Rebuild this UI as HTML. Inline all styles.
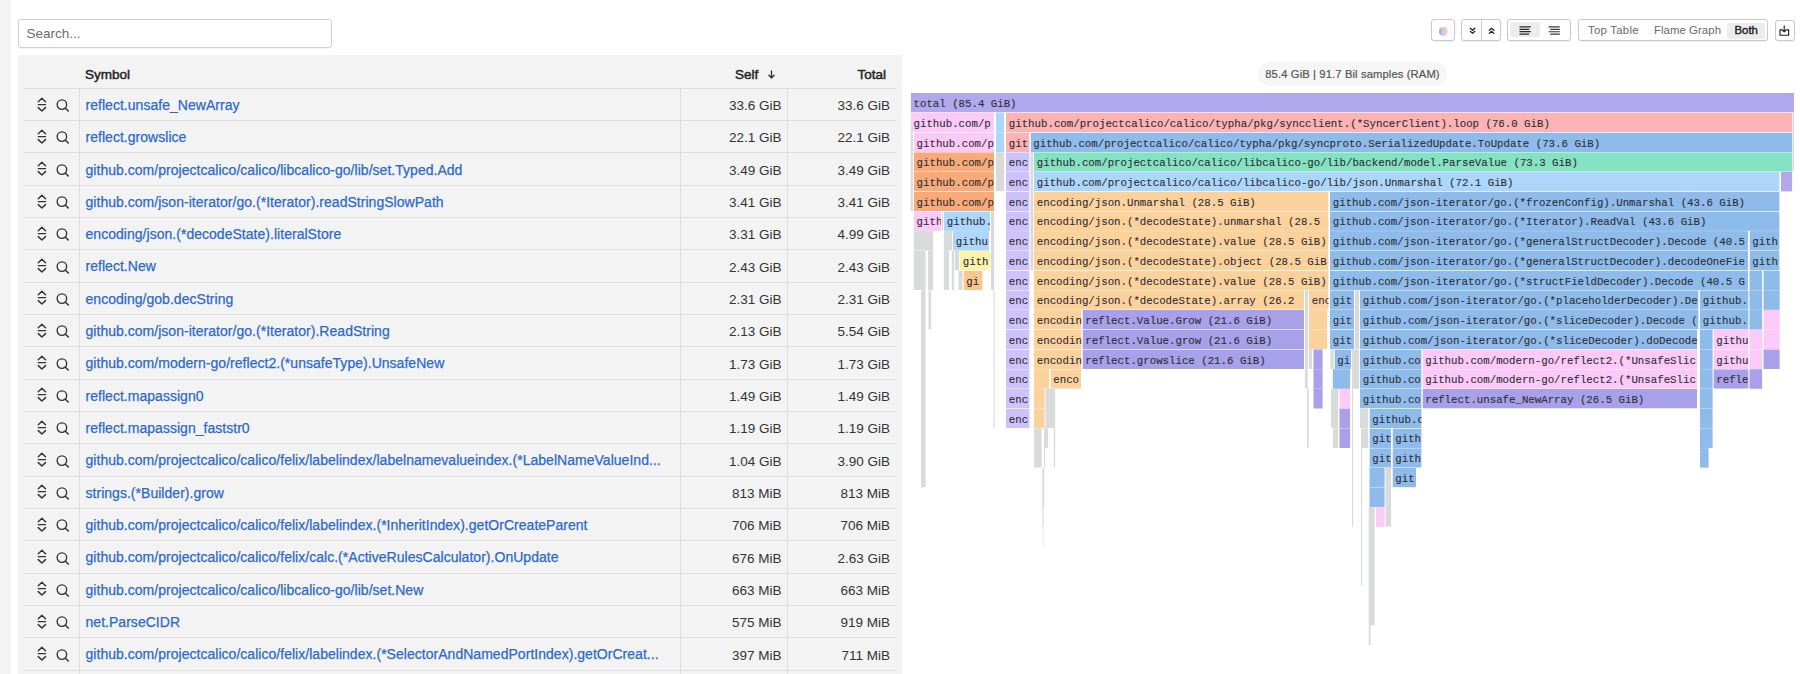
<!DOCTYPE html><html><head><meta charset="utf-8"><style>
*{box-sizing:border-box;margin:0;padding:0}
html,body{width:1800px;height:674px;overflow:hidden;background:#fff;font-family:"Liberation Sans",sans-serif}
.strip{position:absolute;left:0;top:0;width:10.5px;height:674px;background:#f3f3f3}
.search{position:absolute;left:18px;top:19px;width:314px;height:28.5px;border:1px solid #cfcfcf;border-radius:3px;background:#fff;box-shadow:0 1px 1px rgba(0,0,0,0.05)}
.search span{position:absolute;left:7.5px;top:6px;font-size:13.5px;color:#6b6b6b}
.tbl{position:absolute;left:18px;top:55px;width:883.5px;height:640px;background:#f3f3f3}
.hdr{position:absolute;top:0;height:33px;font-size:13.5px;font-weight:400;color:#222;-webkit-text-stroke:0.45px #222}
.hline{position:absolute;left:6px;width:872px;height:1px;background:#dedede}
.vline{position:absolute;width:1px;background:#dedede}
.sym{position:absolute;left:67.5px;font-size:14px;line-height:16px;color:#2d69cc;white-space:nowrap;letter-spacing:0.03px;-webkit-text-stroke:0.25px #2d69cc}
.num{position:absolute;font-size:13.5px;line-height:16px;color:#333;text-align:right;white-space:nowrap}
.ic1{position:absolute;left:18.5px}
.ic2{position:absolute;left:37.6px}
.tb{position:absolute;border:1px solid #c9c9c9;border-radius:3px;background:#fff;box-shadow:0 1px 1px rgba(0,0,0,0.06)}
.pill{position:absolute;left:1258px;top:62px;width:189px;height:24px;border-radius:12px;background:#f6f6f6;font-size:11.2px;color:#555;line-height:24px;text-align:center;letter-spacing:0.13px;-webkit-text-stroke:0.2px #555}
.fg{position:absolute;left:0;top:0}
.b{position:absolute;overflow:hidden;white-space:nowrap;font-family:"Liberation Mono",monospace;font-size:10.75px;line-height:19px;padding-left:3px;color:#2a2a3a}
</style></head><body>
<div class="strip"></div>
<div class="search"><span>Search...</span></div>

<div class="tbl">
<div class="hdr" style="left:67px;top:12px">Symbol</div>
<div class="hdr" style="left:717px;top:12px">Self <svg width="9" height="9" viewBox="0 0 9 9" style="vertical-align:0px;margin-left:5px"><path d="M4.5 1 V7.8 M1.9 5.3 L4.5 7.9 L7.1 5.3" fill="none" stroke="#333" stroke-width="1.35" stroke-linecap="round" stroke-linejoin="round"/></svg></div>
<div class="hdr" style="left:820px;top:12px;width:48px;text-align:right">Total</div>
<div class="hline" style="top:32.8px"></div>
<div class="ic1" style="top:41.56px"><svg width="10" height="15" viewBox="0 0 10 15"><path d="M1.3 4.7 L4.9 1.3 L8.5 4.7 M1.3 7.6 H8.5 M1.3 10.6 L4.9 14.0 L8.5 10.6" fill="none" stroke="#333" stroke-width="1.45" stroke-linecap="round" stroke-linejoin="round"/></svg></div>
<div class="ic2" style="top:44.06px"><svg width="14" height="14" viewBox="0 0 14 14"><circle cx="5.9" cy="5.6" r="4.75" fill="none" stroke="#333" stroke-width="1.35"/><path d="M9.4 9.2 L12.3 12" stroke="#333" stroke-width="1.5" stroke-linecap="round"/></svg></div>
<div class="sym" style="top:41.86px">reflect.unsafe_NewArray</div>
<div class="num" style="left:660px;width:103.5px;top:43.06px">33.6 GiB</div>
<div class="num" style="left:770px;width:102px;top:43.06px">33.6 GiB</div>
<div class="hline" style="top:65.12px"></div>
<div class="ic1" style="top:73.88px"><svg width="10" height="15" viewBox="0 0 10 15"><path d="M1.3 4.7 L4.9 1.3 L8.5 4.7 M1.3 7.6 H8.5 M1.3 10.6 L4.9 14.0 L8.5 10.6" fill="none" stroke="#333" stroke-width="1.45" stroke-linecap="round" stroke-linejoin="round"/></svg></div>
<div class="ic2" style="top:76.38px"><svg width="14" height="14" viewBox="0 0 14 14"><circle cx="5.9" cy="5.6" r="4.75" fill="none" stroke="#333" stroke-width="1.35"/><path d="M9.4 9.2 L12.3 12" stroke="#333" stroke-width="1.5" stroke-linecap="round"/></svg></div>
<div class="sym" style="top:74.18px">reflect.growslice</div>
<div class="num" style="left:660px;width:103.5px;top:75.38px">22.1 GiB</div>
<div class="num" style="left:770px;width:102px;top:75.38px">22.1 GiB</div>
<div class="hline" style="top:97.44px"></div>
<div class="ic1" style="top:106.20px"><svg width="10" height="15" viewBox="0 0 10 15"><path d="M1.3 4.7 L4.9 1.3 L8.5 4.7 M1.3 7.6 H8.5 M1.3 10.6 L4.9 14.0 L8.5 10.6" fill="none" stroke="#333" stroke-width="1.45" stroke-linecap="round" stroke-linejoin="round"/></svg></div>
<div class="ic2" style="top:108.70px"><svg width="14" height="14" viewBox="0 0 14 14"><circle cx="5.9" cy="5.6" r="4.75" fill="none" stroke="#333" stroke-width="1.35"/><path d="M9.4 9.2 L12.3 12" stroke="#333" stroke-width="1.5" stroke-linecap="round"/></svg></div>
<div class="sym" style="top:106.50px">github.com/projectcalico/calico/libcalico-go/lib/set.Typed.Add</div>
<div class="num" style="left:660px;width:103.5px;top:107.70px">3.49 GiB</div>
<div class="num" style="left:770px;width:102px;top:107.70px">3.49 GiB</div>
<div class="hline" style="top:129.76px"></div>
<div class="ic1" style="top:138.52px"><svg width="10" height="15" viewBox="0 0 10 15"><path d="M1.3 4.7 L4.9 1.3 L8.5 4.7 M1.3 7.6 H8.5 M1.3 10.6 L4.9 14.0 L8.5 10.6" fill="none" stroke="#333" stroke-width="1.45" stroke-linecap="round" stroke-linejoin="round"/></svg></div>
<div class="ic2" style="top:141.02px"><svg width="14" height="14" viewBox="0 0 14 14"><circle cx="5.9" cy="5.6" r="4.75" fill="none" stroke="#333" stroke-width="1.35"/><path d="M9.4 9.2 L12.3 12" stroke="#333" stroke-width="1.5" stroke-linecap="round"/></svg></div>
<div class="sym" style="top:138.82px">github.com/json-iterator/go.(*Iterator).readStringSlowPath</div>
<div class="num" style="left:660px;width:103.5px;top:140.02px">3.41 GiB</div>
<div class="num" style="left:770px;width:102px;top:140.02px">3.41 GiB</div>
<div class="hline" style="top:162.08px"></div>
<div class="ic1" style="top:170.84px"><svg width="10" height="15" viewBox="0 0 10 15"><path d="M1.3 4.7 L4.9 1.3 L8.5 4.7 M1.3 7.6 H8.5 M1.3 10.6 L4.9 14.0 L8.5 10.6" fill="none" stroke="#333" stroke-width="1.45" stroke-linecap="round" stroke-linejoin="round"/></svg></div>
<div class="ic2" style="top:173.34px"><svg width="14" height="14" viewBox="0 0 14 14"><circle cx="5.9" cy="5.6" r="4.75" fill="none" stroke="#333" stroke-width="1.35"/><path d="M9.4 9.2 L12.3 12" stroke="#333" stroke-width="1.5" stroke-linecap="round"/></svg></div>
<div class="sym" style="top:171.14px">encoding/json.(*decodeState).literalStore</div>
<div class="num" style="left:660px;width:103.5px;top:172.34px">3.31 GiB</div>
<div class="num" style="left:770px;width:102px;top:172.34px">4.99 GiB</div>
<div class="hline" style="top:194.40px"></div>
<div class="ic1" style="top:203.16px"><svg width="10" height="15" viewBox="0 0 10 15"><path d="M1.3 4.7 L4.9 1.3 L8.5 4.7 M1.3 7.6 H8.5 M1.3 10.6 L4.9 14.0 L8.5 10.6" fill="none" stroke="#333" stroke-width="1.45" stroke-linecap="round" stroke-linejoin="round"/></svg></div>
<div class="ic2" style="top:205.66px"><svg width="14" height="14" viewBox="0 0 14 14"><circle cx="5.9" cy="5.6" r="4.75" fill="none" stroke="#333" stroke-width="1.35"/><path d="M9.4 9.2 L12.3 12" stroke="#333" stroke-width="1.5" stroke-linecap="round"/></svg></div>
<div class="sym" style="top:203.46px">reflect.New</div>
<div class="num" style="left:660px;width:103.5px;top:204.66px">2.43 GiB</div>
<div class="num" style="left:770px;width:102px;top:204.66px">2.43 GiB</div>
<div class="hline" style="top:226.72px"></div>
<div class="ic1" style="top:235.48px"><svg width="10" height="15" viewBox="0 0 10 15"><path d="M1.3 4.7 L4.9 1.3 L8.5 4.7 M1.3 7.6 H8.5 M1.3 10.6 L4.9 14.0 L8.5 10.6" fill="none" stroke="#333" stroke-width="1.45" stroke-linecap="round" stroke-linejoin="round"/></svg></div>
<div class="ic2" style="top:237.98px"><svg width="14" height="14" viewBox="0 0 14 14"><circle cx="5.9" cy="5.6" r="4.75" fill="none" stroke="#333" stroke-width="1.35"/><path d="M9.4 9.2 L12.3 12" stroke="#333" stroke-width="1.5" stroke-linecap="round"/></svg></div>
<div class="sym" style="top:235.78px">encoding/gob.decString</div>
<div class="num" style="left:660px;width:103.5px;top:236.98px">2.31 GiB</div>
<div class="num" style="left:770px;width:102px;top:236.98px">2.31 GiB</div>
<div class="hline" style="top:259.04px"></div>
<div class="ic1" style="top:267.80px"><svg width="10" height="15" viewBox="0 0 10 15"><path d="M1.3 4.7 L4.9 1.3 L8.5 4.7 M1.3 7.6 H8.5 M1.3 10.6 L4.9 14.0 L8.5 10.6" fill="none" stroke="#333" stroke-width="1.45" stroke-linecap="round" stroke-linejoin="round"/></svg></div>
<div class="ic2" style="top:270.30px"><svg width="14" height="14" viewBox="0 0 14 14"><circle cx="5.9" cy="5.6" r="4.75" fill="none" stroke="#333" stroke-width="1.35"/><path d="M9.4 9.2 L12.3 12" stroke="#333" stroke-width="1.5" stroke-linecap="round"/></svg></div>
<div class="sym" style="top:268.10px">github.com/json-iterator/go.(*Iterator).ReadString</div>
<div class="num" style="left:660px;width:103.5px;top:269.30px">2.13 GiB</div>
<div class="num" style="left:770px;width:102px;top:269.30px">5.54 GiB</div>
<div class="hline" style="top:291.36px"></div>
<div class="ic1" style="top:300.12px"><svg width="10" height="15" viewBox="0 0 10 15"><path d="M1.3 4.7 L4.9 1.3 L8.5 4.7 M1.3 7.6 H8.5 M1.3 10.6 L4.9 14.0 L8.5 10.6" fill="none" stroke="#333" stroke-width="1.45" stroke-linecap="round" stroke-linejoin="round"/></svg></div>
<div class="ic2" style="top:302.62px"><svg width="14" height="14" viewBox="0 0 14 14"><circle cx="5.9" cy="5.6" r="4.75" fill="none" stroke="#333" stroke-width="1.35"/><path d="M9.4 9.2 L12.3 12" stroke="#333" stroke-width="1.5" stroke-linecap="round"/></svg></div>
<div class="sym" style="top:300.42px">github.com/modern-go/reflect2.(*unsafeType).UnsafeNew</div>
<div class="num" style="left:660px;width:103.5px;top:301.62px">1.73 GiB</div>
<div class="num" style="left:770px;width:102px;top:301.62px">1.73 GiB</div>
<div class="hline" style="top:323.68px"></div>
<div class="ic1" style="top:332.44px"><svg width="10" height="15" viewBox="0 0 10 15"><path d="M1.3 4.7 L4.9 1.3 L8.5 4.7 M1.3 7.6 H8.5 M1.3 10.6 L4.9 14.0 L8.5 10.6" fill="none" stroke="#333" stroke-width="1.45" stroke-linecap="round" stroke-linejoin="round"/></svg></div>
<div class="ic2" style="top:334.94px"><svg width="14" height="14" viewBox="0 0 14 14"><circle cx="5.9" cy="5.6" r="4.75" fill="none" stroke="#333" stroke-width="1.35"/><path d="M9.4 9.2 L12.3 12" stroke="#333" stroke-width="1.5" stroke-linecap="round"/></svg></div>
<div class="sym" style="top:332.74px">reflect.mapassign0</div>
<div class="num" style="left:660px;width:103.5px;top:333.94px">1.49 GiB</div>
<div class="num" style="left:770px;width:102px;top:333.94px">1.49 GiB</div>
<div class="hline" style="top:356.00px"></div>
<div class="ic1" style="top:364.76px"><svg width="10" height="15" viewBox="0 0 10 15"><path d="M1.3 4.7 L4.9 1.3 L8.5 4.7 M1.3 7.6 H8.5 M1.3 10.6 L4.9 14.0 L8.5 10.6" fill="none" stroke="#333" stroke-width="1.45" stroke-linecap="round" stroke-linejoin="round"/></svg></div>
<div class="ic2" style="top:367.26px"><svg width="14" height="14" viewBox="0 0 14 14"><circle cx="5.9" cy="5.6" r="4.75" fill="none" stroke="#333" stroke-width="1.35"/><path d="M9.4 9.2 L12.3 12" stroke="#333" stroke-width="1.5" stroke-linecap="round"/></svg></div>
<div class="sym" style="top:365.06px">reflect.mapassign_faststr0</div>
<div class="num" style="left:660px;width:103.5px;top:366.26px">1.19 GiB</div>
<div class="num" style="left:770px;width:102px;top:366.26px">1.19 GiB</div>
<div class="hline" style="top:388.32px"></div>
<div class="ic1" style="top:397.08px"><svg width="10" height="15" viewBox="0 0 10 15"><path d="M1.3 4.7 L4.9 1.3 L8.5 4.7 M1.3 7.6 H8.5 M1.3 10.6 L4.9 14.0 L8.5 10.6" fill="none" stroke="#333" stroke-width="1.45" stroke-linecap="round" stroke-linejoin="round"/></svg></div>
<div class="ic2" style="top:399.58px"><svg width="14" height="14" viewBox="0 0 14 14"><circle cx="5.9" cy="5.6" r="4.75" fill="none" stroke="#333" stroke-width="1.35"/><path d="M9.4 9.2 L12.3 12" stroke="#333" stroke-width="1.5" stroke-linecap="round"/></svg></div>
<div class="sym" style="top:397.38px">github.com/projectcalico/calico/felix/labelindex/labelnamevalueindex.(*LabelNameValueInd...</div>
<div class="num" style="left:660px;width:103.5px;top:398.58px">1.04 GiB</div>
<div class="num" style="left:770px;width:102px;top:398.58px">3.90 GiB</div>
<div class="hline" style="top:420.64px"></div>
<div class="ic1" style="top:429.40px"><svg width="10" height="15" viewBox="0 0 10 15"><path d="M1.3 4.7 L4.9 1.3 L8.5 4.7 M1.3 7.6 H8.5 M1.3 10.6 L4.9 14.0 L8.5 10.6" fill="none" stroke="#333" stroke-width="1.45" stroke-linecap="round" stroke-linejoin="round"/></svg></div>
<div class="ic2" style="top:431.90px"><svg width="14" height="14" viewBox="0 0 14 14"><circle cx="5.9" cy="5.6" r="4.75" fill="none" stroke="#333" stroke-width="1.35"/><path d="M9.4 9.2 L12.3 12" stroke="#333" stroke-width="1.5" stroke-linecap="round"/></svg></div>
<div class="sym" style="top:429.70px">strings.(*Builder).grow</div>
<div class="num" style="left:660px;width:103.5px;top:430.90px">813 MiB</div>
<div class="num" style="left:770px;width:102px;top:430.90px">813 MiB</div>
<div class="hline" style="top:452.96px"></div>
<div class="ic1" style="top:461.72px"><svg width="10" height="15" viewBox="0 0 10 15"><path d="M1.3 4.7 L4.9 1.3 L8.5 4.7 M1.3 7.6 H8.5 M1.3 10.6 L4.9 14.0 L8.5 10.6" fill="none" stroke="#333" stroke-width="1.45" stroke-linecap="round" stroke-linejoin="round"/></svg></div>
<div class="ic2" style="top:464.22px"><svg width="14" height="14" viewBox="0 0 14 14"><circle cx="5.9" cy="5.6" r="4.75" fill="none" stroke="#333" stroke-width="1.35"/><path d="M9.4 9.2 L12.3 12" stroke="#333" stroke-width="1.5" stroke-linecap="round"/></svg></div>
<div class="sym" style="top:462.02px">github.com/projectcalico/calico/felix/labelindex.(*InheritIndex).getOrCreateParent</div>
<div class="num" style="left:660px;width:103.5px;top:463.22px">706 MiB</div>
<div class="num" style="left:770px;width:102px;top:463.22px">706 MiB</div>
<div class="hline" style="top:485.28px"></div>
<div class="ic1" style="top:494.04px"><svg width="10" height="15" viewBox="0 0 10 15"><path d="M1.3 4.7 L4.9 1.3 L8.5 4.7 M1.3 7.6 H8.5 M1.3 10.6 L4.9 14.0 L8.5 10.6" fill="none" stroke="#333" stroke-width="1.45" stroke-linecap="round" stroke-linejoin="round"/></svg></div>
<div class="ic2" style="top:496.54px"><svg width="14" height="14" viewBox="0 0 14 14"><circle cx="5.9" cy="5.6" r="4.75" fill="none" stroke="#333" stroke-width="1.35"/><path d="M9.4 9.2 L12.3 12" stroke="#333" stroke-width="1.5" stroke-linecap="round"/></svg></div>
<div class="sym" style="top:494.34px">github.com/projectcalico/calico/felix/calc.(*ActiveRulesCalculator).OnUpdate</div>
<div class="num" style="left:660px;width:103.5px;top:495.54px">676 MiB</div>
<div class="num" style="left:770px;width:102px;top:495.54px">2.63 GiB</div>
<div class="hline" style="top:517.60px"></div>
<div class="ic1" style="top:526.36px"><svg width="10" height="15" viewBox="0 0 10 15"><path d="M1.3 4.7 L4.9 1.3 L8.5 4.7 M1.3 7.6 H8.5 M1.3 10.6 L4.9 14.0 L8.5 10.6" fill="none" stroke="#333" stroke-width="1.45" stroke-linecap="round" stroke-linejoin="round"/></svg></div>
<div class="ic2" style="top:528.86px"><svg width="14" height="14" viewBox="0 0 14 14"><circle cx="5.9" cy="5.6" r="4.75" fill="none" stroke="#333" stroke-width="1.35"/><path d="M9.4 9.2 L12.3 12" stroke="#333" stroke-width="1.5" stroke-linecap="round"/></svg></div>
<div class="sym" style="top:526.66px">github.com/projectcalico/calico/libcalico-go/lib/set.New</div>
<div class="num" style="left:660px;width:103.5px;top:527.86px">663 MiB</div>
<div class="num" style="left:770px;width:102px;top:527.86px">663 MiB</div>
<div class="hline" style="top:549.92px"></div>
<div class="ic1" style="top:558.68px"><svg width="10" height="15" viewBox="0 0 10 15"><path d="M1.3 4.7 L4.9 1.3 L8.5 4.7 M1.3 7.6 H8.5 M1.3 10.6 L4.9 14.0 L8.5 10.6" fill="none" stroke="#333" stroke-width="1.45" stroke-linecap="round" stroke-linejoin="round"/></svg></div>
<div class="ic2" style="top:561.18px"><svg width="14" height="14" viewBox="0 0 14 14"><circle cx="5.9" cy="5.6" r="4.75" fill="none" stroke="#333" stroke-width="1.35"/><path d="M9.4 9.2 L12.3 12" stroke="#333" stroke-width="1.5" stroke-linecap="round"/></svg></div>
<div class="sym" style="top:558.98px">net.ParseCIDR</div>
<div class="num" style="left:660px;width:103.5px;top:560.18px">575 MiB</div>
<div class="num" style="left:770px;width:102px;top:560.18px">919 MiB</div>
<div class="hline" style="top:582.24px"></div>
<div class="ic1" style="top:591.00px"><svg width="10" height="15" viewBox="0 0 10 15"><path d="M1.3 4.7 L4.9 1.3 L8.5 4.7 M1.3 7.6 H8.5 M1.3 10.6 L4.9 14.0 L8.5 10.6" fill="none" stroke="#333" stroke-width="1.45" stroke-linecap="round" stroke-linejoin="round"/></svg></div>
<div class="ic2" style="top:593.50px"><svg width="14" height="14" viewBox="0 0 14 14"><circle cx="5.9" cy="5.6" r="4.75" fill="none" stroke="#333" stroke-width="1.35"/><path d="M9.4 9.2 L12.3 12" stroke="#333" stroke-width="1.5" stroke-linecap="round"/></svg></div>
<div class="sym" style="top:591.30px">github.com/projectcalico/calico/felix/labelindex.(*SelectorAndNamedPortIndex).getOrCreat...</div>
<div class="num" style="left:660px;width:103.5px;top:592.50px">397 MiB</div>
<div class="num" style="left:770px;width:102px;top:592.50px">711 MiB</div>
<div class="hline" style="top:614.56px"></div>
<div class="vline" style="left:61px;top:32.8px;height:620px"></div>
<div class="vline" style="left:661.5px;top:32.8px;height:620px"></div>
<div class="vline" style="left:768.5px;top:32.8px;height:620px"></div>
</div>

<div class="tb" style="left:1431px;top:19px;width:23.5px;height:22px"><svg width="11" height="11" viewBox="0 0 11 11" style="position:absolute;left:6px;top:5.5px"><defs><clipPath id="cc"><circle cx="5.5" cy="5.5" r="4.6"/></clipPath></defs><g clip-path="url(#cc)"><rect x="0" y="0" width="3.2" height="11" fill="#93b4d8"/><rect x="3.2" y="0" width="2.6" height="11" fill="#d8b8e0"/><rect x="5.8" y="0" width="2.4" height="11" fill="#f0c0d8"/><rect x="8.2" y="0" width="3" height="11" fill="#efe3a0"/></g></svg></div>
<div class="tb" style="left:1461px;top:19px;width:39.5px;height:22px"><div style="position:absolute;left:19px;top:0;width:1px;height:20px;background:#cfcfcf"></div>
<svg width="8" height="9" viewBox="0 0 8 9" style="position:absolute;left:6.5px;top:6.5px"><path d="M1.3 1.2 L3.6 3.3 L5.9 1.2 M1.3 4.3 L3.6 6.4 L5.9 4.3" fill="none" stroke="#222" stroke-width="1.25" stroke-linecap="round" stroke-linejoin="round"/></svg>
<svg width="8" height="9" viewBox="0 0 8 9" style="position:absolute;left:25.5px;top:6.5px"><path d="M1.3 3.3 L3.6 1.2 L5.9 3.3 M1.3 6.4 L3.6 4.3 L5.9 6.4" fill="none" stroke="#222" stroke-width="1.25" stroke-linecap="round" stroke-linejoin="round"/></svg></div>
<div class="tb" style="left:1507px;top:19px;width:63.5px;height:22px"><div style="position:absolute;left:1.5px;top:1.5px;width:30px;height:15.5px;background:#ededed;border-radius:2px"></div>
<svg width="13" height="10" viewBox="0 0 13 10" style="position:absolute;left:10.5px;top:6px"><path d="M0.5 0.9 H11.8 M0.5 3.3 H10.2 M0.5 5.7 H11.8 M0.5 8.1 H10.2" stroke="#2a2a2a" stroke-width="1.25"/></svg>
<svg width="13" height="10" viewBox="0 0 13 10" style="position:absolute;left:39.5px;top:6px"><path d="M0.5 0.9 H11.8 M2.2 3.3 H11.8 M0.5 5.7 H11.8 M2.2 8.1 H11.8" stroke="#3a3a3a" stroke-width="1.15"/></svg></div>
<div class="tb" style="left:1577.5px;top:19px;width:190px;height:22px;font-size:11.4px;color:#6a6a6a">
<span style="position:absolute;left:9.5px;top:3.8px;letter-spacing:0.25px">Top Table</span>
<span style="position:absolute;left:75.5px;top:3.8px;letter-spacing:0.05px">Flame Graph</span>
<div style="position:absolute;left:148px;top:2.5px;width:38px;height:16px;background:#ededed;border-radius:2px"></div>
<span style="position:absolute;left:156px;top:3.8px;color:#222;-webkit-text-stroke:0.4px #222">Both</span></div>
<div class="tb" style="left:1774.5px;top:20px;width:20px;height:21px"><svg width="11" height="12" viewBox="0 0 11 12" style="position:absolute;left:3.8px;top:4px"><path d="M5.2 0.8 V6.8 M3.2 4.8 L5.2 6.9 L7.2 4.8 M1 4.8 V10.2 H9.6 V4.8 H8 M1 4.8 H2.6" fill="none" stroke="#222" stroke-width="1.15" stroke-linecap="round" stroke-linejoin="round"/></svg></div>
<div class="pill">85.4 GiB | 91.7 Bil samples (RAM)</div>

<svg class="fg" width="1800" height="674" viewBox="0 0 1800 674" style="position:absolute;left:0;top:0">
<g font-family="Liberation Mono, monospace" font-size="10.75" fill="#2c2d36" stroke="#2c2d36" stroke-width="0.1">
<svg x="910.70" y="93.00" width="883.40" height="19.53"><rect width="100%" height="100%" fill="#b0a7ec" stroke="none"/><text x="2.8" y="13.056" transform="scale(1,1.08)">total (85.4 GiB)</text></svg>
<svg x="910.70" y="112.73" width="83.40" height="19.53"><rect width="100%" height="100%" fill="#fbcaf8" stroke="none"/><text x="2.8" y="13.056" transform="scale(1,1.08)">github.com/p</text></svg>
<rect x="996.00" y="112.73" width="8.10" height="19.53" fill="#acd6fa" stroke="none"/>
<svg x="1006.00" y="112.73" width="786.10" height="19.53"><rect width="100%" height="100%" fill="#fcb3b3" stroke="none"/><text x="2.8" y="13.056" transform="scale(1,1.08)">github.com/projectcalico/calico/typha/pkg/syncclient.(*SyncerClient).loop (76.0 GiB)</text></svg>
<rect x="910.70" y="132.46" width="2.20" height="78.62" fill="#d9dada" stroke="none"/>
<svg x="913.80" y="132.46" width="80.30" height="19.53"><rect width="100%" height="100%" fill="#fbcaf8" stroke="none"/><text x="2.8" y="13.056" transform="scale(1,1.08)">github.com/p</text></svg>
<rect x="996.00" y="132.46" width="8.10" height="19.53" fill="#acd6fa" stroke="none"/>
<svg x="1006.00" y="132.46" width="23.60" height="19.53"><rect width="100%" height="100%" fill="#fcb3b3" stroke="none"/><text x="2.8" y="13.056" transform="scale(1,1.08)">git</text></svg>
<svg x="1030.50" y="132.46" width="761.60" height="19.53"><rect width="100%" height="100%" fill="#8ebbea" stroke="none"/><text x="2.8" y="13.056" transform="scale(1,1.08)">github.com/projectcalico/calico/typha/pkg/syncproto.SerializedUpdate.ToUpdate (73.6 GiB)</text></svg>
<svg x="913.80" y="152.19" width="80.30" height="19.53"><rect width="100%" height="100%" fill="#f8ab78" stroke="none"/><text x="2.8" y="13.056" transform="scale(1,1.08)">github.com/p</text></svg>
<rect x="996.00" y="152.19" width="8.10" height="39.16" fill="#d9dada" stroke="none"/>
<svg x="1006.00" y="152.19" width="23.60" height="19.53"><rect width="100%" height="100%" fill="#cdc3fa" stroke="none"/><text x="2.8" y="13.056" transform="scale(1,1.08)">enc</text></svg>
<rect x="1030.50" y="152.19" width="2.60" height="118.08" fill="#d9dada" stroke="none"/>
<svg x="1034.00" y="152.19" width="758.10" height="19.53"><rect width="100%" height="100%" fill="#84e2c3" stroke="none"/><text x="2.8" y="13.056" transform="scale(1,1.08)">github.com/projectcalico/calico/libcalico-go/lib/backend/model.ParseValue (73.3 GiB)</text></svg>
<svg x="913.80" y="171.92" width="80.30" height="19.53"><rect width="100%" height="100%" fill="#f8ab78" stroke="none"/><text x="2.8" y="13.056" transform="scale(1,1.08)">github.com/p</text></svg>
<svg x="1006.00" y="171.92" width="23.60" height="19.53"><rect width="100%" height="100%" fill="#cdc3fa" stroke="none"/><text x="2.8" y="13.056" transform="scale(1,1.08)">enc</text></svg>
<svg x="1034.00" y="171.92" width="745.60" height="19.53"><rect width="100%" height="100%" fill="#acd6fa" stroke="none"/><text x="2.8" y="13.056" transform="scale(1,1.08)">github.com/projectcalico/calico/libcalico-go/lib/json.Unmarshal (72.1 GiB)</text></svg>
<rect x="1781.00" y="171.92" width="11.10" height="19.53" fill="#b0a7ec" stroke="none"/>
<svg x="913.80" y="191.65" width="80.30" height="19.53"><rect width="100%" height="100%" fill="#f8ab78" stroke="none"/><text x="2.8" y="13.056" transform="scale(1,1.08)">github.com/p</text></svg>
<svg x="1006.00" y="191.65" width="23.60" height="19.53"><rect width="100%" height="100%" fill="#cdc3fa" stroke="none"/><text x="2.8" y="13.056" transform="scale(1,1.08)">enc</text></svg>
<svg x="1034.00" y="191.65" width="294.60" height="19.53"><rect width="100%" height="100%" fill="#fcd29c" stroke="none"/><text x="2.8" y="13.056" transform="scale(1,1.08)">encoding/json.Unmarshal (28.5 GiB)</text></svg>
<svg x="1330.00" y="191.65" width="449.60" height="19.53"><rect width="100%" height="100%" fill="#8ebbea" stroke="none"/><text x="2.8" y="13.056" transform="scale(1,1.08)">github.com/json-iterator/go.(*frozenConfig).Unmarshal (43.6 GiB)</text></svg>
<svg x="913.80" y="211.38" width="27.30" height="19.53"><rect width="100%" height="100%" fill="#fbcaf8" stroke="none"/><text x="2.8" y="13.056" transform="scale(1,1.08)">gith</text></svg>
<rect x="942.00" y="211.38" width="1.10" height="19.43" fill="#d9dada" stroke="none"/>
<svg x="944.00" y="211.38" width="46.10" height="19.53"><rect width="100%" height="100%" fill="#acd6fa" stroke="none"/><text x="2.8" y="13.056" transform="scale(1,1.08)">github.</text></svg>
<rect x="991.00" y="211.38" width="3.10" height="78.62" fill="#d9dada" stroke="none"/>
<svg x="1006.00" y="211.38" width="23.60" height="19.53"><rect width="100%" height="100%" fill="#cdc3fa" stroke="none"/><text x="2.8" y="13.056" transform="scale(1,1.08)">enc</text></svg>
<svg x="1034.00" y="211.38" width="294.60" height="19.53"><rect width="100%" height="100%" fill="#fcd29c" stroke="none"/><text x="2.8" y="13.056" transform="scale(1,1.08)">encoding/json.(*decodeState).unmarshal (28.5 </text></svg>
<svg x="1330.00" y="211.38" width="449.60" height="19.53"><rect width="100%" height="100%" fill="#8ebbea" stroke="none"/><text x="2.8" y="13.056" transform="scale(1,1.08)">github.com/json-iterator/go.(*Iterator).ReadVal (43.6 GiB)</text></svg>
<rect x="913.80" y="231.11" width="19.30" height="19.43" fill="#d9dada" stroke="none"/>
<rect x="943.80" y="231.11" width="8.30" height="19.43" fill="#d9dada" stroke="none"/>
<svg x="953.00" y="231.11" width="36.10" height="19.53"><rect width="100%" height="100%" fill="#acd6fa" stroke="none"/><text x="2.8" y="13.056" transform="scale(1,1.08)">githu</text></svg>
<svg x="1006.00" y="231.11" width="23.60" height="19.53"><rect width="100%" height="100%" fill="#cdc3fa" stroke="none"/><text x="2.8" y="13.056" transform="scale(1,1.08)">enc</text></svg>
<svg x="1034.00" y="231.11" width="294.60" height="19.53"><rect width="100%" height="100%" fill="#fcd29c" stroke="none"/><text x="2.8" y="13.056" transform="scale(1,1.08)">encoding/json.(*decodeState).value (28.5 GiB)</text></svg>
<svg x="1330.00" y="231.11" width="418.10" height="19.53"><rect width="100%" height="100%" fill="#8ebbea" stroke="none"/><text x="2.8" y="13.056" transform="scale(1,1.08)">github.com/json-iterator/go.(*generalStructDecoder).Decode (40.5</text></svg>
<svg x="1749.50" y="231.11" width="30.10" height="19.53"><rect width="100%" height="100%" fill="#8ebbea" stroke="none"/><text x="2.8" y="13.056" transform="scale(1,1.08)">gith</text></svg>
<rect x="913.80" y="250.84" width="11.80" height="39.16" fill="#d9dada" stroke="none"/>
<rect x="928.00" y="250.84" width="5.10" height="39.16" fill="#d9dada" stroke="none"/>
<rect x="943.80" y="250.84" width="5.30" height="39.16" fill="#d9dada" stroke="none"/>
<rect x="951.80" y="250.84" width="2.30" height="39.16" fill="#d9dada" stroke="none"/>
<rect x="955.00" y="250.84" width="4.10" height="19.43" fill="#d9dada" stroke="none"/>
<svg x="960.00" y="250.84" width="30.10" height="19.53"><rect width="100%" height="100%" fill="#fcf3a8" stroke="none"/><text x="2.8" y="13.056" transform="scale(1,1.08)">gith</text></svg>
<svg x="1006.00" y="250.84" width="23.60" height="19.53"><rect width="100%" height="100%" fill="#cdc3fa" stroke="none"/><text x="2.8" y="13.056" transform="scale(1,1.08)">enc</text></svg>
<svg x="1034.00" y="250.84" width="294.60" height="19.53"><rect width="100%" height="100%" fill="#fcd29c" stroke="none"/><text x="2.8" y="13.056" transform="scale(1,1.08)">encoding/json.(*decodeState).object (28.5 GiB</text></svg>
<svg x="1330.00" y="250.84" width="418.10" height="19.53"><rect width="100%" height="100%" fill="#8ebbea" stroke="none"/><text x="2.8" y="13.056" transform="scale(1,1.08)">github.com/json-iterator/go.(*generalStructDecoder).decodeOneFie</text></svg>
<svg x="1749.50" y="250.84" width="30.10" height="19.53"><rect width="100%" height="100%" fill="#8ebbea" stroke="none"/><text x="2.8" y="13.056" transform="scale(1,1.08)">gith</text></svg>
<rect x="958.50" y="270.57" width="4.10" height="19.43" fill="#d9dada" stroke="none"/>
<svg x="963.50" y="270.57" width="19.10" height="19.53"><rect width="100%" height="100%" fill="#fac68c" stroke="none"/><text x="2.8" y="13.056" transform="scale(1,1.08)">gi</text></svg>
<svg x="1006.00" y="270.57" width="23.60" height="19.53"><rect width="100%" height="100%" fill="#cdc3fa" stroke="none"/><text x="2.8" y="13.056" transform="scale(1,1.08)">enc</text></svg>
<svg x="1034.00" y="270.57" width="294.60" height="19.53"><rect width="100%" height="100%" fill="#fcd29c" stroke="none"/><text x="2.8" y="13.056" transform="scale(1,1.08)">encoding/json.(*decodeState).value (28.5 GiB)</text></svg>
<svg x="1330.00" y="270.57" width="418.10" height="19.53"><rect width="100%" height="100%" fill="#8ebbea" stroke="none"/><text x="2.8" y="13.056" transform="scale(1,1.08)">github.com/json-iterator/go.(*structFieldDecoder).Decode (40.5 G</text></svg>
<rect x="1749.50" y="270.57" width="12.60" height="19.53" fill="#8ebbea" stroke="none"/>
<rect x="1763.50" y="270.57" width="16.10" height="19.53" fill="#8ebbea" stroke="none"/>
<rect x="921.00" y="290.30" width="4.60" height="197.00" fill="#d9dada" stroke="none"/>
<rect x="928.50" y="290.30" width="2.60" height="39.16" fill="#d9dada" stroke="none"/>
<rect x="993.50" y="290.30" width="1.10" height="137.81" fill="#d9dada" stroke="none"/>
<svg x="1006.00" y="290.30" width="23.60" height="19.53"><rect width="100%" height="100%" fill="#cdc3fa" stroke="none"/><text x="2.8" y="13.056" transform="scale(1,1.08)">enc</text></svg>
<svg x="1034.00" y="290.30" width="270.10" height="19.53"><rect width="100%" height="100%" fill="#fcd29c" stroke="none"/><text x="2.8" y="13.056" transform="scale(1,1.08)">encoding/json.(*decodeState).array (26.2 </text></svg>
<rect x="1305.00" y="290.30" width="3.10" height="78.62" fill="#d9dada" stroke="none"/>
<svg x="1309.00" y="290.30" width="19.60" height="19.53"><rect width="100%" height="100%" fill="#fcd29c" stroke="none"/><text x="2.8" y="13.056" transform="scale(1,1.08)">enc</text></svg>
<svg x="1330.00" y="290.30" width="24.10" height="19.53"><rect width="100%" height="100%" fill="#8ebbea" stroke="none"/><text x="2.8" y="13.056" transform="scale(1,1.08)">git</text></svg>
<rect x="1355.00" y="290.30" width="4.10" height="58.89" fill="#d9dada" stroke="none"/>
<svg x="1360.00" y="290.30" width="338.60" height="19.53"><rect width="100%" height="100%" fill="#8ebbea" stroke="none"/><text x="2.8" y="13.056" transform="scale(1,1.08)">github.com/json-iterator/go.(*placeholderDecoder).De</text></svg>
<svg x="1700.00" y="290.30" width="48.60" height="19.53"><rect width="100%" height="100%" fill="#8ebbea" stroke="none"/><text x="2.8" y="13.056" transform="scale(1,1.08)">github.</text></svg>
<rect x="1749.50" y="290.30" width="12.60" height="19.53" fill="#8ebbea" stroke="none"/>
<rect x="1763.50" y="290.30" width="16.10" height="19.53" fill="#8ebbea" stroke="none"/>
<svg x="1006.00" y="310.03" width="23.60" height="19.53"><rect width="100%" height="100%" fill="#cdc3fa" stroke="none"/><text x="2.8" y="13.056" transform="scale(1,1.08)">enc</text></svg>
<svg x="1034.00" y="310.03" width="47.60" height="19.53"><rect width="100%" height="100%" fill="#fcd29c" stroke="none"/><text x="2.8" y="13.056" transform="scale(1,1.08)">encodin</text></svg>
<svg x="1082.50" y="310.03" width="221.60" height="19.53"><rect width="100%" height="100%" fill="#a8a0e8" stroke="none"/><text x="2.8" y="13.056" transform="scale(1,1.08)">reflect.Value.Grow (21.6 GiB)</text></svg>
<rect x="1309.00" y="310.03" width="18.10" height="19.53" fill="#fcd29c" stroke="none"/>
<svg x="1330.00" y="310.03" width="24.10" height="19.53"><rect width="100%" height="100%" fill="#8ebbea" stroke="none"/><text x="2.8" y="13.056" transform="scale(1,1.08)">git</text></svg>
<svg x="1360.00" y="310.03" width="338.60" height="19.53"><rect width="100%" height="100%" fill="#8ebbea" stroke="none"/><text x="2.8" y="13.056" transform="scale(1,1.08)">github.com/json-iterator/go.(*sliceDecoder).Decode (</text></svg>
<svg x="1700.00" y="310.03" width="48.60" height="19.53"><rect width="100%" height="100%" fill="#8ebbea" stroke="none"/><text x="2.8" y="13.056" transform="scale(1,1.08)">github.</text></svg>
<rect x="1749.50" y="310.03" width="12.60" height="19.53" fill="#8ebbea" stroke="none"/>
<rect x="1763.50" y="310.03" width="16.10" height="19.53" fill="#fbcaf8" stroke="none"/>
<svg x="1006.00" y="329.76" width="23.60" height="19.53"><rect width="100%" height="100%" fill="#cdc3fa" stroke="none"/><text x="2.8" y="13.056" transform="scale(1,1.08)">enc</text></svg>
<svg x="1034.00" y="329.76" width="47.60" height="19.53"><rect width="100%" height="100%" fill="#fcd29c" stroke="none"/><text x="2.8" y="13.056" transform="scale(1,1.08)">encodin</text></svg>
<svg x="1082.50" y="329.76" width="221.60" height="19.53"><rect width="100%" height="100%" fill="#a8a0e8" stroke="none"/><text x="2.8" y="13.056" transform="scale(1,1.08)">reflect.Value.grow (21.6 GiB)</text></svg>
<rect x="1309.00" y="329.76" width="18.10" height="19.53" fill="#fcd29c" stroke="none"/>
<svg x="1330.00" y="329.76" width="24.10" height="19.53"><rect width="100%" height="100%" fill="#8ebbea" stroke="none"/><text x="2.8" y="13.056" transform="scale(1,1.08)">git</text></svg>
<svg x="1360.00" y="329.76" width="337.10" height="19.53"><rect width="100%" height="100%" fill="#8ebbea" stroke="none"/><text x="2.8" y="13.056" transform="scale(1,1.08)">github.com/json-iterator/go.(*sliceDecoder).doDecode</text></svg>
<rect x="1700.00" y="329.76" width="12.60" height="19.53" fill="#8ebbea" stroke="none"/>
<svg x="1713.50" y="329.76" width="35.10" height="19.53"><rect width="100%" height="100%" fill="#fbcaf8" stroke="none"/><text x="2.8" y="13.056" transform="scale(1,1.08)">githu</text></svg>
<rect x="1749.50" y="329.76" width="12.60" height="19.53" fill="#fbcaf8" stroke="none"/>
<rect x="1763.50" y="329.76" width="16.10" height="19.53" fill="#fbcaf8" stroke="none"/>
<svg x="1006.00" y="349.49" width="23.60" height="19.53"><rect width="100%" height="100%" fill="#cdc3fa" stroke="none"/><text x="2.8" y="13.056" transform="scale(1,1.08)">enc</text></svg>
<svg x="1034.00" y="349.49" width="47.60" height="19.53"><rect width="100%" height="100%" fill="#fcd29c" stroke="none"/><text x="2.8" y="13.056" transform="scale(1,1.08)">encodin</text></svg>
<svg x="1082.50" y="349.49" width="221.60" height="19.53"><rect width="100%" height="100%" fill="#a8a0e8" stroke="none"/><text x="2.8" y="13.056" transform="scale(1,1.08)">reflect.growslice (21.6 GiB)</text></svg>
<rect x="1309.00" y="349.49" width="3.10" height="19.43" fill="#d9dada" stroke="none"/>
<rect x="1313.50" y="349.49" width="9.10" height="19.53" fill="#a8a0e8" stroke="none"/>
<rect x="1330.50" y="349.49" width="3.10" height="19.43" fill="#d9dada" stroke="none"/>
<svg x="1334.50" y="349.49" width="16.60" height="19.53"><rect width="100%" height="100%" fill="#8ebbea" stroke="none"/><text x="2.8" y="13.056" transform="scale(1,1.08)">gi</text></svg>
<rect x="1352.00" y="349.49" width="7.10" height="39.16" fill="#d9dada" stroke="none"/>
<svg x="1360.00" y="349.49" width="61.60" height="19.53"><rect width="100%" height="100%" fill="#8ebbea" stroke="none"/><text x="2.8" y="13.056" transform="scale(1,1.08)">github.co</text></svg>
<svg x="1422.50" y="349.49" width="274.60" height="19.53"><rect width="100%" height="100%" fill="#fbcaf8" stroke="none"/><text x="2.8" y="13.056" transform="scale(1,1.08)">github.com/modern-go/reflect2.(*UnsafeSlic</text></svg>
<rect x="1700.00" y="349.49" width="12.60" height="19.53" fill="#8ebbea" stroke="none"/>
<svg x="1713.50" y="349.49" width="35.10" height="19.53"><rect width="100%" height="100%" fill="#fbcaf8" stroke="none"/><text x="2.8" y="13.056" transform="scale(1,1.08)">githu</text></svg>
<rect x="1749.50" y="349.49" width="12.60" height="19.53" fill="#fbcaf8" stroke="none"/>
<rect x="1763.50" y="349.49" width="16.10" height="19.53" fill="#a8a0e8" stroke="none"/>
<svg x="1006.00" y="369.22" width="23.60" height="19.53"><rect width="100%" height="100%" fill="#cdc3fa" stroke="none"/><text x="2.8" y="13.056" transform="scale(1,1.08)">enc</text></svg>
<rect x="1034.00" y="369.22" width="15.10" height="19.53" fill="#fcd29c" stroke="none"/>
<svg x="1050.50" y="369.22" width="30.60" height="19.53"><rect width="100%" height="100%" fill="#fcd29c" stroke="none"/><text x="2.8" y="13.056" transform="scale(1,1.08)">enco</text></svg>
<rect x="1305.00" y="369.22" width="2.60" height="19.43" fill="#d9dada" stroke="none"/>
<rect x="1313.50" y="369.22" width="9.10" height="19.53" fill="#a8a0e8" stroke="none"/>
<rect x="1332.80" y="369.22" width="17.30" height="19.53" fill="#8ebbea" stroke="none"/>
<svg x="1360.00" y="369.22" width="61.60" height="19.53"><rect width="100%" height="100%" fill="#8ebbea" stroke="none"/><text x="2.8" y="13.056" transform="scale(1,1.08)">github.co</text></svg>
<svg x="1422.50" y="369.22" width="274.60" height="19.53"><rect width="100%" height="100%" fill="#fbcaf8" stroke="none"/><text x="2.8" y="13.056" transform="scale(1,1.08)">github.com/modern-go/reflect2.(*UnsafeSlic</text></svg>
<rect x="1700.00" y="369.22" width="12.60" height="19.53" fill="#8ebbea" stroke="none"/>
<svg x="1713.50" y="369.22" width="35.10" height="19.53"><rect width="100%" height="100%" fill="#a8a0e8" stroke="none"/><text x="2.8" y="13.056" transform="scale(1,1.08)">refle</text></svg>
<rect x="1749.50" y="369.22" width="12.60" height="19.53" fill="#a8a0e8" stroke="none"/>
<svg x="1006.00" y="388.95" width="23.60" height="19.53"><rect width="100%" height="100%" fill="#cdc3fa" stroke="none"/><text x="2.8" y="13.056" transform="scale(1,1.08)">enc</text></svg>
<rect x="1034.00" y="388.95" width="10.60" height="19.53" fill="#fcd29c" stroke="none"/>
<rect x="1045.50" y="388.95" width="9.60" height="39.16" fill="#d9dada" stroke="none"/>
<rect x="1307.00" y="388.95" width="1.60" height="58.89" fill="#d9dada" stroke="none"/>
<rect x="1313.50" y="388.95" width="9.10" height="19.53" fill="#a8a0e8" stroke="none"/>
<rect x="1331.00" y="388.95" width="7.10" height="39.16" fill="#d9dada" stroke="none"/>
<rect x="1339.50" y="388.95" width="10.60" height="19.53" fill="#fbcaf8" stroke="none"/>
<rect x="1352.00" y="388.95" width="1.10" height="137.81" fill="#d9dada" stroke="none"/>
<svg x="1360.00" y="388.95" width="61.60" height="19.53"><rect width="100%" height="100%" fill="#8ebbea" stroke="none"/><text x="2.8" y="13.056" transform="scale(1,1.08)">github.co</text></svg>
<svg x="1422.50" y="388.95" width="274.60" height="19.53"><rect width="100%" height="100%" fill="#a8a0e8" stroke="none"/><text x="2.8" y="13.056" transform="scale(1,1.08)">reflect.unsafe_NewArray (26.5 GiB)</text></svg>
<rect x="1700.00" y="388.95" width="12.60" height="19.53" fill="#8ebbea" stroke="none"/>
<svg x="1006.00" y="408.68" width="23.60" height="19.53"><rect width="100%" height="100%" fill="#cdc3fa" stroke="none"/><text x="2.8" y="13.056" transform="scale(1,1.08)">enc</text></svg>
<rect x="1034.00" y="408.68" width="10.60" height="19.53" fill="#fcd29c" stroke="none"/>
<rect x="1339.50" y="408.68" width="10.60" height="19.53" fill="#a8a0e8" stroke="none"/>
<rect x="1360.00" y="408.68" width="8.10" height="19.43" fill="#d9dada" stroke="none"/>
<svg x="1369.50" y="408.68" width="52.10" height="19.53"><rect width="100%" height="100%" fill="#8ebbea" stroke="none"/><text x="2.8" y="13.056" transform="scale(1,1.08)">github.c</text></svg>
<rect x="1700.00" y="408.68" width="12.60" height="19.53" fill="#8ebbea" stroke="none"/>
<rect x="1034.00" y="428.41" width="7.60" height="39.16" fill="#d9dada" stroke="none"/>
<rect x="1044.00" y="428.41" width="4.10" height="19.43" fill="#d9dada" stroke="none"/>
<rect x="1053.70" y="428.41" width="1.40" height="39.16" fill="#d9dada" stroke="none"/>
<rect x="1333.00" y="428.41" width="5.10" height="19.43" fill="#d9dada" stroke="none"/>
<rect x="1339.50" y="428.41" width="10.60" height="19.53" fill="#a8a0e8" stroke="none"/>
<rect x="1361.00" y="428.41" width="7.10" height="19.43" fill="#d9dada" stroke="none"/>
<svg x="1369.50" y="428.41" width="21.60" height="19.53"><rect width="100%" height="100%" fill="#8ebbea" stroke="none"/><text x="2.8" y="13.056" transform="scale(1,1.08)">git</text></svg>
<svg x="1392.50" y="428.41" width="29.10" height="19.53"><rect width="100%" height="100%" fill="#8ebbea" stroke="none"/><text x="2.8" y="13.056" transform="scale(1,1.08)">gith</text></svg>
<rect x="1700.00" y="428.41" width="12.60" height="19.53" fill="#8ebbea" stroke="none"/>
<rect x="1700.00" y="448.14" width="8.60" height="19.53" fill="#8ebbea" stroke="none"/>
<rect x="1044.00" y="448.14" width="1.10" height="19.43" fill="#d9dada" stroke="none"/>
<rect x="1361.00" y="448.14" width="1.10" height="137.81" fill="#d9dada" stroke="none"/>
<svg x="1369.50" y="448.14" width="21.60" height="19.53"><rect width="100%" height="100%" fill="#8ebbea" stroke="none"/><text x="2.8" y="13.056" transform="scale(1,1.08)">git</text></svg>
<svg x="1392.50" y="448.14" width="29.10" height="19.53"><rect width="100%" height="100%" fill="#8ebbea" stroke="none"/><text x="2.8" y="13.056" transform="scale(1,1.08)">gith</text></svg>
<rect x="1042.30" y="467.87" width="1.80" height="39.16" fill="#d9dada" stroke="none"/>
<rect x="1369.50" y="467.87" width="15.10" height="19.53" fill="#8ebbea" stroke="none"/>
<rect x="1385.50" y="467.87" width="5.60" height="58.89" fill="#d9dada" stroke="none"/>
<svg x="1392.50" y="467.87" width="23.60" height="19.53"><rect width="100%" height="100%" fill="#8ebbea" stroke="none"/><text x="2.8" y="13.056" transform="scale(1,1.08)">git</text></svg>
<rect x="1369.50" y="487.60" width="15.10" height="19.53" fill="#8ebbea" stroke="none"/>
<rect x="1042.50" y="507.33" width="1.10" height="19.43" fill="#d9dada" stroke="none"/>
<rect x="1368.70" y="507.33" width="5.90" height="118.08" fill="#d9dada" stroke="none"/>
<rect x="1375.80" y="507.33" width="8.80" height="19.53" fill="#fbcaf8" stroke="none"/>
<rect x="1042.80" y="527.06" width="0.60" height="19.43" fill="#d9dada" stroke="none"/>
<rect x="1368.70" y="625.71" width="1.90" height="19.43" fill="#d9dada" stroke="none"/>
<rect x="1792.40" y="112.73" width="1.70" height="58.89" fill="#d9dada" stroke="none"/>
</g></svg>
</body></html>
